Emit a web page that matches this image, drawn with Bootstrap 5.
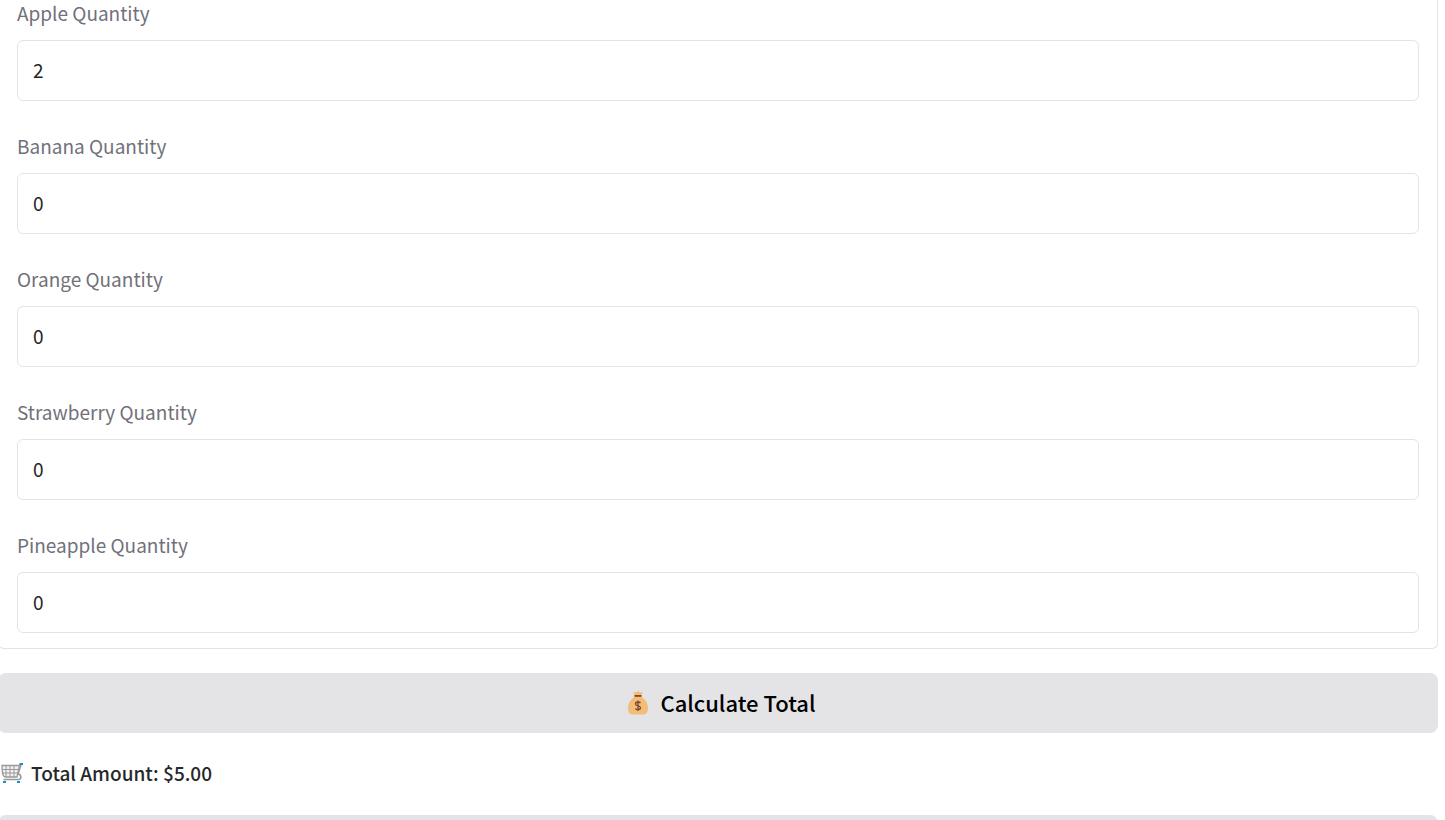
<!DOCTYPE html>
<html lang="en">
<head>
<meta charset="utf-8">
<meta name="viewport" content="width=device-width, initial-scale=1">
<title>Fruit Calculator</title>
<link href="https://cdn.jsdelivr.net/npm/bootstrap@5.3.0/dist/css/bootstrap.min.css" rel="stylesheet">
<style>
  body { font-family: "Noto Sans CJK SC", sans-serif; font-size: 19px; line-height: 28px; color: #27272a; }
  .app { margin-left: -2px; padding-right: 7px; }
  .panel { border: 1px solid #e4e4e7; border-top: 0; border-radius: 0 0 6px 6px; padding: 0 18px 15px; gap: 32px; }
  .field-label { color: #71717a; margin-bottom: 15px; line-height: 25px; }
  .qty { height: 61px; font-size: 19px; padding: 0 15px 2px; border-color: #e4e4e7; border-radius: 6px; color: #27272a; appearance: textfield; }
  .qty::-webkit-inner-spin-button { appearance: none; margin: 0; }
  .action { --bs-btn-bg: #e4e4e7; --bs-btn-color: #000; --bs-btn-hover-bg: #d4d4d8; --bs-btn-border-width: 0; height: 60px; gap: 10px; padding: 6px 12px 8px; border-radius: 8px; font-size: 22px; line-height: 32px; font-weight: 500; }
  .total { font-weight: 500; padding: 0 3px 2px; height: 34px; }
</style>
</head>
<body class="bg-white vh-100 overflow-hidden">
<main class="app d-flex flex-column gap-4">
  <form class="panel d-flex flex-column">
    <div><label class="field-label d-block" for="apple">Apple Quantity</label><input class="form-control qty" type="number" id="apple" value="2"></div>
    <div><label class="field-label d-block" for="banana">Banana Quantity</label><input class="form-control qty" type="number" id="banana" value="0"></div>
    <div><label class="field-label d-block" for="orange">Orange Quantity</label><input class="form-control qty" type="number" id="orange" value="0"></div>
    <div><label class="field-label d-block" for="strawberry">Strawberry Quantity</label><input class="form-control qty" type="number" id="strawberry" value="0"></div>
    <div><label class="field-label d-block" for="pineapple">Pineapple Quantity</label><input class="form-control qty" type="number" id="pineapple" value="0"></div>
  </form>
  <button type="button" class="btn action w-100 d-flex align-items-center justify-content-center">
    <svg width="30" height="26" viewBox="-6 -1 30 26" aria-hidden="true">
      <path d="M7 2l2.500.5L12 1l2.500 1.500L17 2l-1.500 3v2c3.500 2 6.500 6 6.500 11 0 4-1.500 6.500-4.500 6.500h-11C3.500 24.500 2 22 2 18c0-5 3-9 6.500-11V5z" fill="#f3bd76"/>
      <path d="M8.500 5h7v1.800h-7z" fill="#7d4533"/>
      <path d="M14.500 13c-1-1.400-5-1.600-5 1 0 2.600 5 1.200 5 3.800 0 2.500-4.200 2.200-5.300.8M12 10.500v10.500" fill="none" stroke="#7d4533" stroke-width="1.300"/>
    </svg>
    <span>Calculate Total</span>
  </button>
  <div class="total d-flex align-items-center">
    <svg class="me-2" width="22" height="22" viewBox="0 0 22 22" aria-hidden="true">
      <path d="M1 3.500h17.500L16 15H4.500C2 15 1 12 1 3.500z" fill="#f1f1f1" stroke="#999" stroke-width="1.300"/>
      <path d="M5 4v11M9 4v11M13 4v11M1.500 7.500h16M2 11h15" stroke="#999" stroke-width="1"/>
      <path d="M20 2.500 17 12c3 0 4 5 1 5.500H2.500" fill="none" stroke="#999" stroke-width="1.700"/>
      <path d="M18.500 1H22v2h-3.500zM2 19h3v2H2zM16 19h3v2h-3z" fill="#168fd2"/>
    </svg>
    <span>Total Amount: $5.00</span>
  </div>
  <button type="button" class="btn action w-100" aria-label="Next action"></button>
</main>
<script src="https://cdn.jsdelivr.net/npm/bootstrap@5.3.0/dist/js/bootstrap.bundle.min.js"></script>
</body>
</html>
